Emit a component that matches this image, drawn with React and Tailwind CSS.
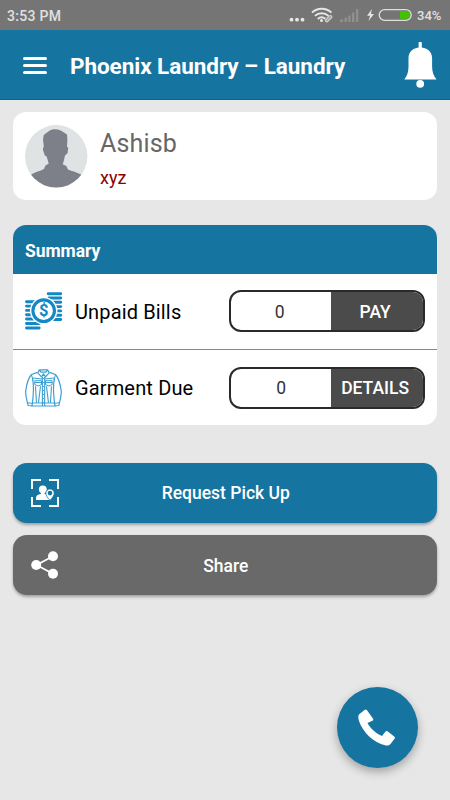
import clsx from 'clsx';

function StatusBar() {
    return (
        <div className="flex h-[30px] items-center justify-between bg-[#757575] pl-[7px] pr-[8px] text-[#e0e0e0]">
            <span className="pt-[2px] text-[14px] font-medium tracking-[0.3px]">3:53 PM</span>
            <div className="flex items-center">
                <svg className="h-[30px] w-[127px]" viewBox="0 0 127 30" fill="none">
                    <g fill="#e6e6e6">
                        <circle cx="6.500" cy="19.700" r="1.900" />
                        <circle cx="12" cy="19.700" r="1.900" />
                        <circle cx="17.500" cy="19.700" r="1.900" />
                    </g>
                    <g stroke="#e6e6e6" strokeWidth="2">
                        <path d="M27 12.600a14 14 0 0 1 19.400 0" />
                        <path d="M29.900 15.900a9.800 9.800 0 0 1 13.600 0" />
                        <path d="M32.800 18.900a5.800 5.800 0 0 1 7.400-.3" />
                    </g>
                    <circle cx="36.500" cy="20.400" r="1.500" fill="#e6e6e6" />
                    <path d="M40.800 19.500l3.600-3.600a1.400 1.400 0 0 1 2 2l-3.800 3.600a1.300 1.300 0 0 1-1.800-2z" stroke="#d0d0d0" strokeWidth="1.200" fill="#a0a0a0" />
                    <g fill="#8f8f8f">
                        <path d="M55 19.500h3V22h-3z" />
                        <path d="M59.500 17.500h2.400V22h-2.400z" />
                        <path d="M63.200 15.500h2.400V22h-2.400z" />
                        <path d="M67 12.500h2.400V22H67z" />
                        <path d="M71 9h2.300v13H71z" />
                    </g>
                    <path d="M86.900 9l-4.800 6.700h3l-1.600 5.300 5.500-7h-3.100z" fill="#e6e6e6" />
                    <rect x="94.200" y="9.600" width="32" height="10.800" rx="5.400" stroke="#dedede" strokeWidth="1.300" />
                    <path d="M115 11.300h6.500a3.700 3.700 0 0 1 0 7.400H115z" fill="#43c300" />
                </svg>
                <span className="ml-[5px] w-[25px] pt-px text-[13px] font-medium">34%</span>
            </div>
        </div>
    );
}

function Header() {
    return (
        <header className="flex h-[70px] items-center border-b border-[#126089] bg-[#1674a1] pl-[23px] pr-[13px] text-white">
            <button className="flex w-6 flex-col gap-1 pt-px">
                <span className="h-[3px] rounded-full bg-white" />
                <span className="h-[3px] rounded-full bg-white" />
                <span className="h-[3px] rounded-full bg-white" />
            </button>
            <h1 className="ml-[23px] mt-[5px] whitespace-nowrap text-[22.500px] font-bold tracking-[-0.060px]">Phoenix Laundry – Laundry</h1>
            <svg className="ml-auto h-[46px] w-[33px]" viewBox="0 0 33 46" fill="white">
                <path d="M14.600 1a1.600 1.600 0 0 1 3.200 0v4.600c6.500.8 10.300 5 10.300 11v8c0 5.300 1.600 9.600 4.400 12.800H.3c2.800-3.200 4.200-7.500 4.200-12.800v-8c0-6 3.700-10.200 10.100-11z" />
                <circle cx="16.200" cy="41.800" r="3.900" />
            </svg>
        </header>
    );
}

function Avatar() {
    return (
        <svg className="h-[63px] w-[63px] shrink-0" viewBox="0 0 63 63">
            <clipPath id="avatar">
                <circle cx="31.200" cy="31.300" r="31.200" />
            </clipPath>
            <g clipPath="url(#avatar)">
                <path d="M0 0h63v63H0z" fill="#dfe3e4" />
                <path
                    d="M18.700 10L24.700 5.500Q29.700 3 36.300 5.800L42 9.500 42.400 14 42 22l1.300.6-.8 5.700-2.500 2.200-1.300 5.700-1 3 3.600 1.800 1.700 3.400C48 46.500 54 47.500 57.500 50.500V63H5V50.500C8.500 47.500 14 46.500 19 44l1.300-3.300 3.400-2.200-2-6.800-2-1.400L18 25v-2.500l.9-.3L18 15z"
                    fill="#7d8088"
                />
            </g>
        </svg>
    );
}

function ProfileCard() {
    return (
        <section className="flex h-[88px] items-center rounded-[13px] bg-white pl-[12.500px]">
            <Avatar />
            <div className="ml-[12px] flex flex-col pt-[4px]">
                <span className="text-[25px] leading-[30px] tracking-[0.150px] text-[#666]">Ashisb</span>
                <span className="mt-[9px] text-[18px] leading-5 text-[#8b0000]">xyz</span>
            </div>
        </section>
    );
}

function CoinsIcon() {
    return (
        <svg className="h-[38px] w-[38px]" viewBox="0 0 38 38">
            <g stroke="#1488c4" strokeWidth="2.900" strokeLinecap="round">
                <path d="M23.200 1.700h12.600M24 6h11.800M24 10.300h11.800M24 14.600h11.800M24 18.900h11.800M24 23.200h11.800M24 27.500h11.800" />
                <path d="M1.500 9.800h11M1.500 14.100h10M1.500 18.400h10M1.500 22.700h10M1.500 27h12M1.500 31.500h12.700M1.500 36h12.700" />
            </g>
            <circle cx="18.700" cy="18.700" r="13.800" fill="white" />
            <circle cx="18.700" cy="18.700" r="10.800" fill="white" stroke="#1488c4" strokeWidth="3.100" />
            <text x="18.700" y="24.500" textAnchor="middle" fontSize="16.500" fontWeight="700" fill="#1488c4">$</text>
        </svg>
    );
}

function JacketIcon() {
    return (
        <svg className="h-[38px] w-[38px]" viewBox="0 0 38 38" fill="none" stroke="#3a9fd2" strokeWidth="1" strokeLinejoin="round">
            <path d="M14.500.8h8.200l1.500 3-3.700 4-2-3-2 3-3.700-4zM14.500 1.200l1.500 2h5l1.500-2" strokeWidth="1.200" />
            <path d="M12.500 3.300L6.500 5.500C3 9.500 1.500 16 .7 22c-.3 5 1.300 10 2.500 14.500l4.200.5M24.500 3.300l6 2.200c3.500 4 5 10.500 5.800 16.500.3 5-1.300 10-2.500 14.500l-4.200.5" strokeWidth="1.200" />
            <path d="M7.500 9c1.700 8 1 18-.5 28h23c-1.500-10-2.200-20-.5-28" strokeWidth="1.200" />
            <path d="M2.800 33.700l4.500.8M34.200 33.700l-4.500.8M7.300 34h22.400M6.500 5.500l1.500 6M30.500 5.500L29 11.500M8 9l9 1M29 9l-9 1" />
            <path d="M9.800 11.700h6.700v3.800l-3.300 1.500-3.400-1.500zM20.500 11.700h6.700v3.800L23.800 17l-3.300-1.500zM9.800 13.500h6.700M20.500 13.500h6.700" />
            <path d="M10.500 17.200l1 16.500M15.500 17.200l-2 16.500M21.500 17.200l2 16.500M26.500 17.200l-1 16.500M17.400 8v29M19.700 8v29" strokeWidth="1.100" />
            <path d="M18.600 9v27" strokeDasharray="1 3" />
        </svg>
    );
}

function SummaryRow({ icon, label, value, action, shifted }) {
    return (
        <div className="flex h-[76px] items-center pl-[12.500px] pr-[12.500px]">
            {icon}
            <span className="ml-3 w-[154px] pt-px text-[20px] tracking-[0.150px] text-black">{label}</span>
            <div className="flex h-[42px] w-[196px] overflow-hidden rounded-[12px] border-2 border-[#2a2a2a] bg-white">
                <span className={clsx('flex w-[100px] items-center justify-center pt-[2px] text-[17.500px] text-[#333]', shifted ? 'pl-px' : 'pr-[2px]')}>
                    {value}
                </span>
                <button className="flex-1 bg-[#4b4b4b] pr-[3px] pt-[2px] text-[17.500px] font-medium text-white">{action}</button>
            </div>
        </div>
    );
}

function SummaryCard() {
    return (
        <section className="mt-[25px] h-[200px] overflow-hidden rounded-[13px] bg-white">
            <h2 className="flex h-[48.500px] items-center bg-[#1674a1] pl-[12.500px] pt-[3px] text-[17.500px] font-bold tracking-[-0.050px] text-white">Summary</h2>
            <div className="divide-y divide-[#888]">
                <SummaryRow icon={<CoinsIcon />} label="Unpaid Bills" value="0" action="PAY" />
                <SummaryRow icon={<JacketIcon />} label="Garment Due" value="0" action="DETAILS" shifted />
            </div>
        </section>
    );
}

function PickupIcon() {
    return (
        <svg className="h-7 w-7" viewBox="0 0 28 28" fill="none">
            <path d="M1 10V1h9M18 1h9v9M27 18v9h-9M10 27H1v-9" stroke="white" strokeWidth="1.900" />
            <circle cx="11.800" cy="10.300" r="3.900" fill="white" />
            <path d="M5 21v-2c0-2.300 1.700-3.500 5-4.300v-2h3.500v2c3.500.7 5 2 5 4.300v2z" fill="white" />
            <path d="M19 21.600c-2.500-3.300-4.200-5-4.200-7.400a4.200 4.200 0 0 1 8.400 0c0 2.400-1.700 4.100-4.200 7.400z" fill="white" stroke="#1674a1" strokeWidth=".8" />
            <circle cx="19" cy="14.100" r="2.300" fill="#1674a1" />
        </svg>
    );
}

function ShareIcon() {
    return (
        <svg className="h-7 w-7" viewBox="0 0 28 28" fill="white">
            <path d="M22 5.300L5.500 14 22 22.700" stroke="white" strokeWidth="1.800" fill="none" />
            <circle cx="22" cy="5.300" r="5" />
            <circle cx="5.200" cy="14" r="5" />
            <circle cx="22" cy="22.700" r="5" />
        </svg>
    );
}

function ActionButton({ icon, label, className }) {
    return (
        <button
            className={clsx(
                'grid h-[60px] w-full grid-cols-[28px_1fr_28px] items-center rounded-[14px] px-[18.500px] text-[17.500px] font-medium text-white shadow-[0_2px_3px_rgba(0,0,0,0.3)]',
                className
            )}
        >
            {icon}
            <span className="pl-[2px] pt-[2px]">{label}</span>
        </button>
    );
}

function App() {
    return (
        <div className="relative h-[800px] w-[450px] overflow-hidden bg-[#e7e7e7] font-['Roboto',sans-serif]">
            <StatusBar />
            <Header />
            <main className="pl-[12.500px] pr-[13px] pt-3">
                <ProfileCard />
                <SummaryCard />
                <div className="mt-[37.500px] flex flex-col gap-[12.500px]">
                    <ActionButton icon={<PickupIcon />} label="Request Pick Up" className="bg-[#1674a1]" />
                    <ActionButton icon={<ShareIcon />} label="Share" className="bg-[#696969]" />
                </div>
            </main>
            <button className="absolute bottom-[32.500px] right-[32.500px] flex h-[81px] w-[81px] items-center justify-center rounded-full bg-[#1674a1] shadow-[0_4px_10px_rgba(0,0,0,0.3)]">
                <svg className="h-[37px] w-[38px]" viewBox="0 0 38 37" fill="white">
                    <path d="M6.500 1L1.500 5C-.2 6.500.2 9 1 12c3.500 11 15 22 26 24.300 2 .4 4 .3 5.300-1l4.200-5.500c.7-1 .5-1.700-.3-2.400l-6.700-5.100c-.8-.6-1.500-.5-2 .3L24 27c-5-2-12-7.500-14.500-13l5-2.300c.9-.5 1.100-1.200.6-2L9 1.200C8.400.3 7.400.2 6.500 1z" />
                </svg>
            </button>
        </div>
    );
}

export default App;
